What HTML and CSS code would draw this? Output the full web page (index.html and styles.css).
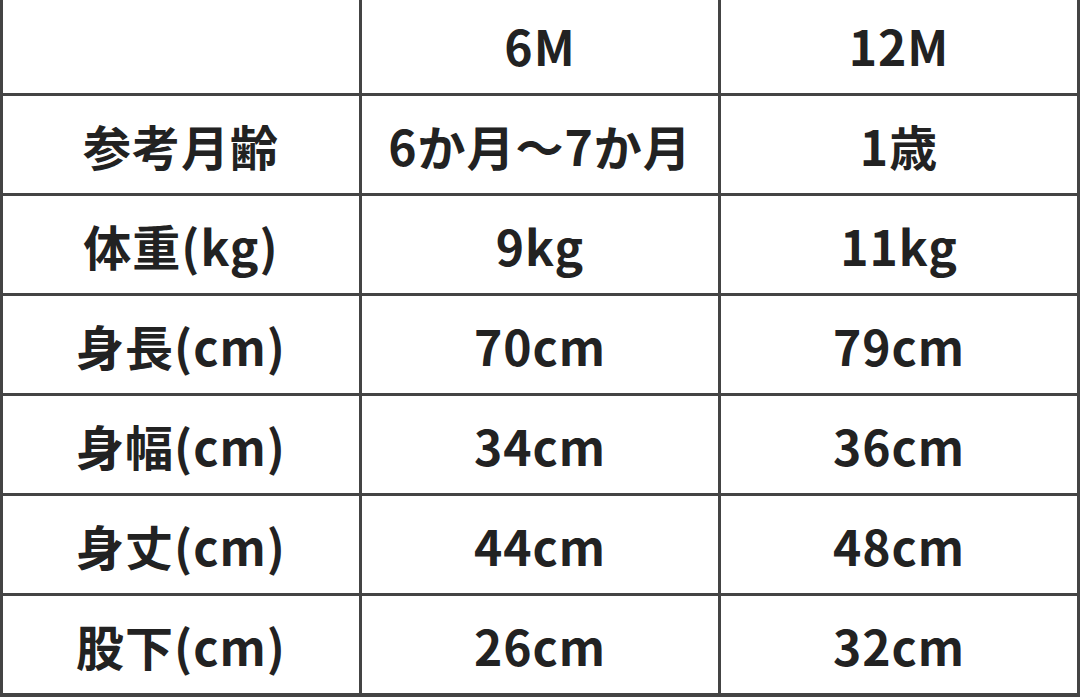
FILE: index.html
```html
<!DOCTYPE html>
<html lang="ja">
<head>
<meta charset="utf-8">
<link rel="stylesheet" href="styles.css">
</head>
<body>
<div class="sheet">
  <div class="cell"></div>
  <div class="cell cell-head">6M</div>
  <div class="cell cell-head">12M</div>

  <div class="cell">参考月齢</div>
  <div class="cell">6か月〜7か月</div>
  <div class="cell">1歳</div>

  <div class="cell">体重(kg)</div>
  <div class="cell">9kg</div>
  <div class="cell">11kg</div>

  <div class="cell">身長(cm)</div>
  <div class="cell">70cm</div>
  <div class="cell">79cm</div>

  <div class="cell">身幅(cm)</div>
  <div class="cell">34cm</div>
  <div class="cell">36cm</div>

  <div class="cell">身丈(cm)</div>
  <div class="cell">44cm</div>
  <div class="cell">48cm</div>

  <div class="cell">股下(cm)</div>
  <div class="cell">26cm</div>
  <div class="cell">32cm</div>
</div>
</body>
</html>
```

FILE: styles.css
```css
html, body {
  margin: 0;
  padding: 0;
  background: #ffffff;
}

.sheet {
  width: 1080px;
  height: 697px;
  box-sizing: border-box;
  display: grid;
  grid-template-columns: repeat(3, 1fr);
  grid-template-rows: 93px repeat(6, 97px);
  gap: 3px;
  background: #444444;
  border-left: 3px solid #444444;
  border-right: 3px solid #444444;
  border-bottom: 3px solid #444444;
  font-family: "Noto Sans CJK JP", "Noto Sans", sans-serif;
  font-weight: 700;
  font-size: 48px;
  letter-spacing: 1px;
  color: #222222;
}

.cell {
  background: #ffffff;
  display: flex;
  align-items: center;
  justify-content: center;
  line-height: 1;
}

.cell-head {
  padding-bottom: 4px;
}
```
